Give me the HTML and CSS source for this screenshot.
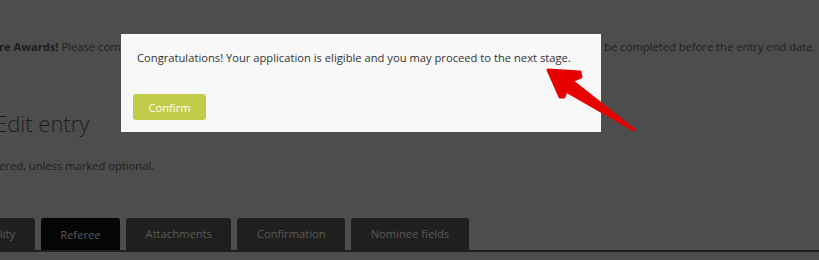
FILE: index.html
```html
<!DOCTYPE html>
<html lang="en">
<head>
    <meta charset="UTF-8">
    <title>Edit entry</title>
    <link rel="stylesheet" href="styles.css">
</head>
<body>
    <!-- Page behind the dialog -->
    <div class="page">
        <p class="notice"><b>re Awards!</b> Please complete all sections of the application form. Please note that all sections of the entry form must be completed before the entry end date.</p>
        <h1 class="title">Edit entry</h1>
        <p class="hint">ered, unless marked optional.</p>

        <div class="tabs">
            <div class="tab first">Eligibility</div>
            <div class="tab active">Referee</div>
            <div class="tab">Attachments</div>
            <div class="tab">Confirmation</div>
            <div class="tab">Nominee fields</div>
        </div>
    </div>

    <!-- Dialog -->
    <div class="modal">
        <p class="modal-text">Congratulations! Your application is eligible and you may proceed to the next stage.</p>
        <button class="confirm-btn">Confirm</button>
    </div>

    <!-- Arrow annotation -->
    <svg class="arrow" width="819" height="260" viewBox="0 0 819 260">
        <polygon points="548,70 580,72 581,77 572,81 634,130 566,91 564,97 560,97"
                 fill="#e60000" stroke="#e60000" stroke-width="3" stroke-linejoin="round"/>
    </svg>
</body>
</html>
```

FILE: styles.css
```css
body {
    margin: 0;
    height: 260px;
    overflow: hidden;
    background: #4d4d4d;
    font-family: 'Open Sans', 'Liberation Sans', sans-serif;
    font-size: 11.2px;
    color: #1e1e1e;
}

.page {
    padding-top: 38px;
}

.notice {
    margin: 0 0 0 -1px;
    line-height: 18px;
    white-space: nowrap;
}

.title {
    margin: 51px 0 0 -5px;
    font-size: 22px;
    font-weight: 300;
    line-height: 32px;
}

.hint {
    margin: 18px 0 0 -1px;
    line-height: 18px;
}

.tabs {
    display: flex;
    gap: 6px;
    margin-top: 43px;
    border-bottom: 2px solid #1e1e1e;
}

.tab {
    height: 32px;
    line-height: 32px;
    padding: 0 19.5px;
    background: #1f1f1f;
    color: #5a5a5a;
    border-radius: 3px 3px 0 0;
    white-space: nowrap;
}

.tab.first {
    margin-left: -50px;
}

.tab.active {
    background: #050505;
    line-height: 34px;
}

.modal {
    position: absolute;
    left: 121px;
    top: 34px;
    width: 480px;
    height: 98px;
    box-sizing: border-box;
    padding: 15px 12px 0 12px;
    background: #f8f8f8;
}

.modal-text {
    margin: 0 0 27px 4px;
    line-height: 18px;
    color: #333;
}

.confirm-btn {
    display: block;
    width: 73px;
    height: 26px;
    padding: 0;
    border: none;
    border-radius: 3px;
    background: #c3cc48;
    color: #fff;
    font-family: inherit;
    font-size: 11.2px;
}

.arrow {
    position: absolute;
    left: 0;
    top: 0;
    pointer-events: none;
}
```
